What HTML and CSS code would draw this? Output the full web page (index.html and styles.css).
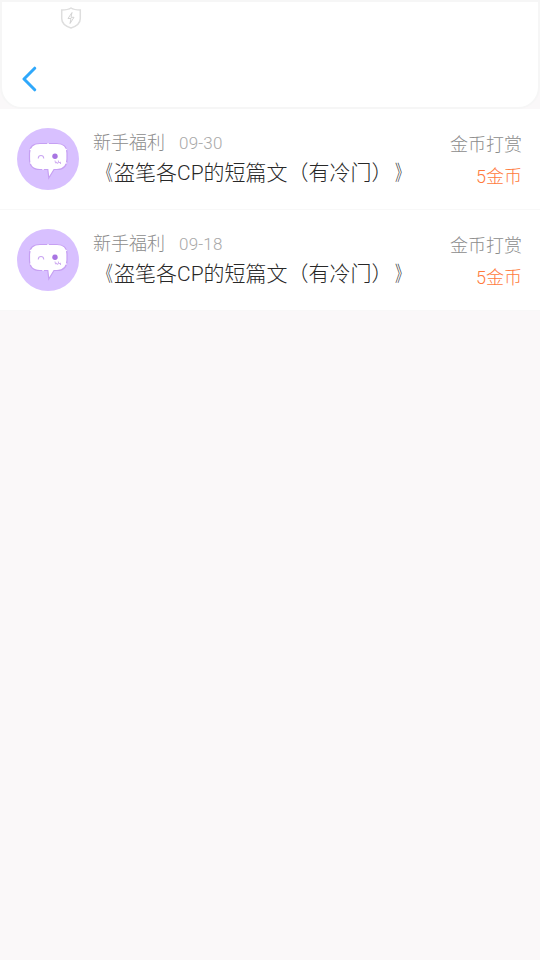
FILE: index.html
```html
<!DOCTYPE html>
<html lang="zh-CN">
<head>
<meta charset="utf-8">
<title>金币打赏</title>
<link rel="stylesheet" href="styles.css">
</head>
<body>
<svg class="defs" width="0" height="0" aria-hidden="true">
  <symbol id="avatar" viewBox="0 0 62 62">
    <circle cx="31" cy="31" r="31" fill="#d8c0ff"/>
    <path d="M23 15.500H40C46 15.500 50 19 50 25V31C50 38 46 41.500 40 41.500H37L31.800 50L30.800 41.500H23C16 41.500 12.500 38 12.500 31V25C12.500 19 16 15.500 23 15.500Z" fill="#fff" stroke="#c6a0f3" stroke-width="1.200"/>
    <path d="M13.500 21.500h.1M49 21.500h.1M13.500 35h.1M49 35h.1M31 15.700h.1M26 41.300h.1" fill="none" stroke="#fff" stroke-width="1.600" stroke-linecap="round"/>
    <path d="M21.300 30.500V30Q21.500 27.500 24 27.500T26.700 30V30.500" fill="none" stroke="#c9a5f1" stroke-width="1.100"/>
    <circle cx="38" cy="28.300" r="2.700" fill="#a875e2"/>
    <path d="M38 32.500l.5 2.500 1.500-1 .3 2M41.300 32.500l.5 2.500 1.500-1 .3 2" fill="none" stroke="#c59aed" stroke-width=".8"/>
  </symbol>
</svg>
<header class="header">
  <svg class="shield" viewBox="0 0 22 22"><path d="M11 1Q14 3 20.300 3V11.500Q20.300 18 11 21Q1.700 18 1.700 11.500V3Q8 3 11 1Z" fill="none" stroke="#dedede" stroke-width="1.500"/><path d="M12 5.500L8 11.500H11L10 16.500L14 10.300H11Z" fill="none" stroke="#cfcfcf" stroke-width=".9"/></svg>
  <svg class="back" viewBox="0 0 16 26"><path d="M12.700 2.200L2 13L12.700 23.800" fill="none" stroke="#2fa8fb" stroke-width="3" stroke-linecap="round" stroke-linejoin="round"/></svg>
</header>
<main class="list">
  <article class="item">
    <svg class="avatar"><use href="#avatar"/></svg>
    <div class="content">
      <div class="meta"><span>新手福利</span><time class="date">09-30</time></div>
      <div class="title"><span class="quote">《</span>盗笔各CP的短篇文（有冷门）<span class="quote end">》</span></div>
    </div>
    <div class="reward"><div>金币打赏</div><div class="coins">5金币</div></div>
  </article>
  <article class="item">
    <svg class="avatar"><use href="#avatar"/></svg>
    <div class="content">
      <div class="meta"><span>新手福利</span><time class="date">09-18</time></div>
      <div class="title"><span class="quote">《</span>盗笔各CP的短篇文（有冷门）<span class="quote end">》</span></div>
    </div>
    <div class="reward"><div>金币打赏</div><div class="coins">5金币</div></div>
  </article>
</main>
</body>
</html>
```
FILE: styles.css
```css
* { box-sizing: border-box; }
body {
  margin: 0;
  min-height: 960px;
  background: #faf8f9;
  font-family: Roboto, "Noto Sans CJK SC Light", "Noto Sans CJK SC", sans-serif;
  font-weight: 300;
  text-spacing-trim: space-all;
}
.defs { display: block; }
.header {
  height: 109px;
  border: 2px solid #f6f6f6;
  border-radius: 0 0 22px 22px;
  background: #fff;
  display: flex;
  flex-direction: column;
  padding: 5px 0 0 20px;
}
.shield { width: 22px; height: 22px; margin-left: 38px; }
.back { width: 16px; height: 26px; margin-top: 37px; }
.list { background: #fff; }
.item {
  height: 101px;
  display: flex;
  padding: 19px 18px 0 17px;
  border-bottom: 1px solid #f8f8f8;
}
.avatar { width: 62px; height: 62px; flex: none; }
.content { flex: 1; margin-left: 14px; padding-top: 1px; white-space: nowrap; }
.meta {
  display: flex;
  height: 28px;
  line-height: 28px;
  font-size: 18px;
  color: #8c8c8c;
}
.date { margin-left: 14px; font-size: 17px; letter-spacing: .2px; color: #a8a8a8; }
.title { font-size: 21px; line-height: 32px; color: #282828; }
.quote { display: inline-block; line-height: 1; transform: scaleX(.68); transform-origin: 80% 50%; }
.quote.end { transform-origin: 0 50%; margin-left: 2px; }
.reward { padding-top: 1px; font-size: 18px; line-height: 32px; text-align: right; color: #8c8c8c; }
.coins { color: #ff7a3c; }
```
